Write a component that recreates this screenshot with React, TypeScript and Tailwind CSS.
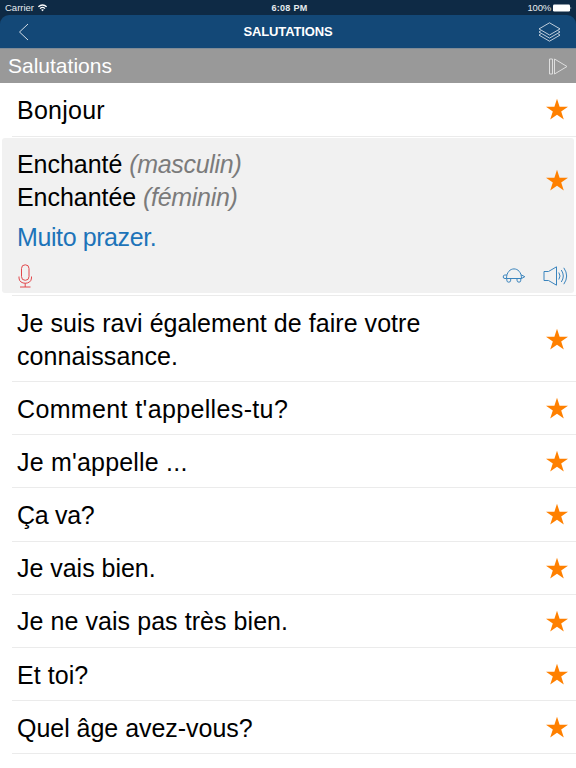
type Line = { text: string; tracking: string };

type Phrase = {
  lines: Line[];
  height: string;
};

const firstPhrase: Phrase = {
  lines: [{ text: 'Bonjour', tracking: 'tracking-[0.25px]' }],
  height: 'h-[53.5px]',
};

const phrases: Phrase[] = [
  {
    lines: [
      { text: 'Je suis ravi également de faire votre', tracking: 'tracking-[0.05px]' },
      { text: 'connaissance.', tracking: 'tracking-[0.1px]' },
    ],
    height: 'h-[86px]',
  },
  { lines: [{ text: "Comment t'appelles-tu?", tracking: 'tracking-[0.36px]' }], height: 'h-[53.2px]' },
  { lines: [{ text: "Je m'appelle ...", tracking: 'tracking-[0.2px]' }], height: 'h-[53.2px]' },
  { lines: [{ text: 'Ça va?', tracking: 'tracking-[-0.3px]' }], height: 'h-[53.2px]' },
  { lines: [{ text: 'Je vais bien.', tracking: 'tracking-[-0.03px]' }], height: 'h-[53.2px]' },
  { lines: [{ text: 'Je ne vais pas très bien.', tracking: 'tracking-[0.06px]' }], height: 'h-[53.2px]' },
  { lines: [{ text: 'Et toi?', tracking: 'tracking-[0.05px]' }], height: 'h-[53.2px]' },
  { lines: [{ text: 'Quel âge avez-vous?', tracking: 'tracking-[-0.03px]' }], height: 'h-[53.2px]' },
];

function Star() {
  return (
    <svg width="22" height="22" viewBox="0 -0.8 22 22" className="shrink-0" fill="#ff8000">
      <path d="M11 0L13.6 7.9H22L15.2 12.8L17.8 20.8L11 15.9L4.2 20.8L6.8 12.8L0 7.9H8.4Z" />
    </svg>
  );
}

function StatusBar() {
  return (
    <div className="grid grid-cols-3 items-center h-[15px] pt-px pl-[5px] pr-[4px] text-[9.5px] leading-[14px] text-[#e6eaee]">
      <div className="flex items-center gap-1">
        <span>Carrier</span>
        <svg width="9" height="8" viewBox="0 0 9 8" fill="none" stroke="#fff" strokeWidth="1.3">
          <path d="M0.4 2.8C2.8 0.4 6.2 0.4 8.6 2.8" />
          <path d="M2 4.6C3.4 3.2 5.6 3.2 7 4.6" />
          <path d="M4.5 7.3L3.1 5.8Q4.5 4.8 5.9 5.8Z" fill="#fff" stroke="none" />
        </svg>
      </div>
      <span className="pl-[2px] text-center font-bold text-[9px] tracking-[0.3px]">6:08 PM</span>
      <div className="flex items-center justify-end gap-[2px]">
        <span className="tracking-[-0.2px]">100%</span>
        <svg width="19" height="8" viewBox="0 0 19 8" fill="#fff">
          <rect x="0" y="0.5" width="17" height="7" rx="1.3" />
          <path d="M17.6 2.7Q19 4 17.6 5.3Z" />
        </svg>
      </div>
    </div>
  );
}

function NavBar() {
  return (
    <header className="flex items-center justify-between h-[33px] pl-[18px] pr-[15px] rounded-t-[9px] bg-[#134877]">
      <svg width="12" height="18" viewBox="0 0 12 18" fill="none" stroke="#d3dde6" strokeWidth="1">
        <path d="M10 1L1.5 9L10 17" />
      </svg>
      <h1 className="text-[13px] font-bold text-white pl-[8px] tracking-[-0.15px]">SALUTATIONS</h1>
      <svg width="23" height="20" viewBox="0 0 23 20" fill="none" stroke="#d3dde6" strokeWidth="0.9">
        <path d="M11.5 0.8L22 6.9L11.5 13L1 6.9Z" />
        <path d="M2.8 8.9L1 10L11.5 16.1L22 10L20.2 8.9" />
        <path d="M2.8 12L1 13.1L11.5 19.2L22 13.1L20.2 12" />
      </svg>
    </header>
  );
}

function SectionHeader() {
  return (
    <div className="flex items-center justify-between h-[35px] pl-2 pr-[8px] bg-[#999999] border-t border-[#7f8b96]">
      <h2 className="text-[21px] leading-[34px] text-white">Salutations</h2>
      <svg width="19" height="17" viewBox="0 0 19 17" fill="none" stroke="#dedede" strokeWidth="1">
        <path d="M0.5 1H3.5V16H0.5Z" />
        <path d="M5.5 1L18 8.5L5.5 16Z" />
      </svg>
    </div>
  );
}

function PhraseRow({ phrase }: { phrase: Phrase }) {
  return (
    <li className={`flex items-center justify-between ml-3 pl-[5px] pr-2 border-b border-[#ebebeb] ${phrase.height}`}>
      <div className="pt-[2px] text-[25px] leading-[33px] text-black">
        {phrase.lines.map((line) => (
          <p key={line.text} className={line.tracking}>{line.text}</p>
        ))}
      </div>
      <Star />
    </li>
  );
}

function ExpandedRow() {
  return (
    <li className="h-[159.5px] pt-[1.5px]">
      <div className="mx-[2px] h-[155px] rounded-[3px] bg-[#f1f1f1] pl-[15px] pr-[6px] pt-[9px]">
        <div className="flex items-center justify-between h-[66px]">
          <div className="pt-[2px] text-[25px] leading-[33px] tracking-[-0.05px] text-black">
            <p>Enchanté <em className="text-[#7b7b7b] tracking-[-0.3px]">(masculin)</em></p>
            <p>Enchantée <em className="text-[#7b7b7b] tracking-[-0.3px]">(féminin)</em></p>
          </div>
          <Star />
        </div>
        <p className="mt-[8px] text-[25px] leading-[33px] tracking-[-0.4px] text-[#1d74b9]">Muito prazer.</p>
        {/* record / slow playback / playback */}
        <div className="flex items-center mt-[10px] h-[24px]">
          <svg width="16" height="24" viewBox="0 0 16 24" fill="none" stroke="#e2474b" strokeWidth="1">
            <rect x="4.5" y="0.8" width="7.5" height="15.5" rx="3.7" />
            <path d="M2 12.5V14C2 21 14.5 21 14.5 14V12.5M8.2 19.2V23M3 23H13.5" />
          </svg>
          <svg className="ml-auto" width="24" height="16" viewBox="0 0 24 16" fill="none" stroke="#3a84bd" strokeWidth="1">
            <path d="M4.5 10.5C4.5 -2.3 19.5 -2.3 19.5 10.5Z" />
            <path d="M4.8 7H2.8Q1.2 7 1.2 9Q1.2 10.5 3 10.5H4.5M19 6.8L22.8 8.7L19.5 10.5" />
            <path d="M4.8 10.5V12.2Q4.8 14.2 6.7 14.2Q8.7 14.2 8.7 12.2V10.5M15 10.5V12.2Q15 14.2 17 14.2Q18.8 14.2 18.8 12.2V10.5" />
          </svg>
          <svg className="ml-[17px]" width="25" height="20" viewBox="0 0 25 20" fill="none" stroke="#3a84bd" strokeWidth="1">
            <path d="M1 5.5H5.5L13.5 0.8V19.2L5.5 14.5H1Z" />
            <path d="M15.8 6.5Q18.2 10 15.8 13.5M18.3 4Q22.3 10 18.3 16M20.8 1.8Q26.5 10 20.8 18.2" />
          </svg>
        </div>
      </div>
      <div className="ml-3 mt-[2px] h-px bg-[#ebebeb]" />
    </li>
  );
}

export default function App() {
  return (
    <div className="w-[576px] h-[768px] overflow-hidden bg-white font-['Liberation_Sans',Arial,sans-serif]">
      <div className="bg-[#0e2a45]">
        <StatusBar />
        <NavBar />
      </div>
      <SectionHeader />
      <ul>
        <PhraseRow phrase={firstPhrase} />
        <ExpandedRow />
        {phrases.map((phrase) => (
          <PhraseRow key={phrase.lines[0].text} phrase={phrase} />
        ))}
      </ul>
    </div>
  );
}
